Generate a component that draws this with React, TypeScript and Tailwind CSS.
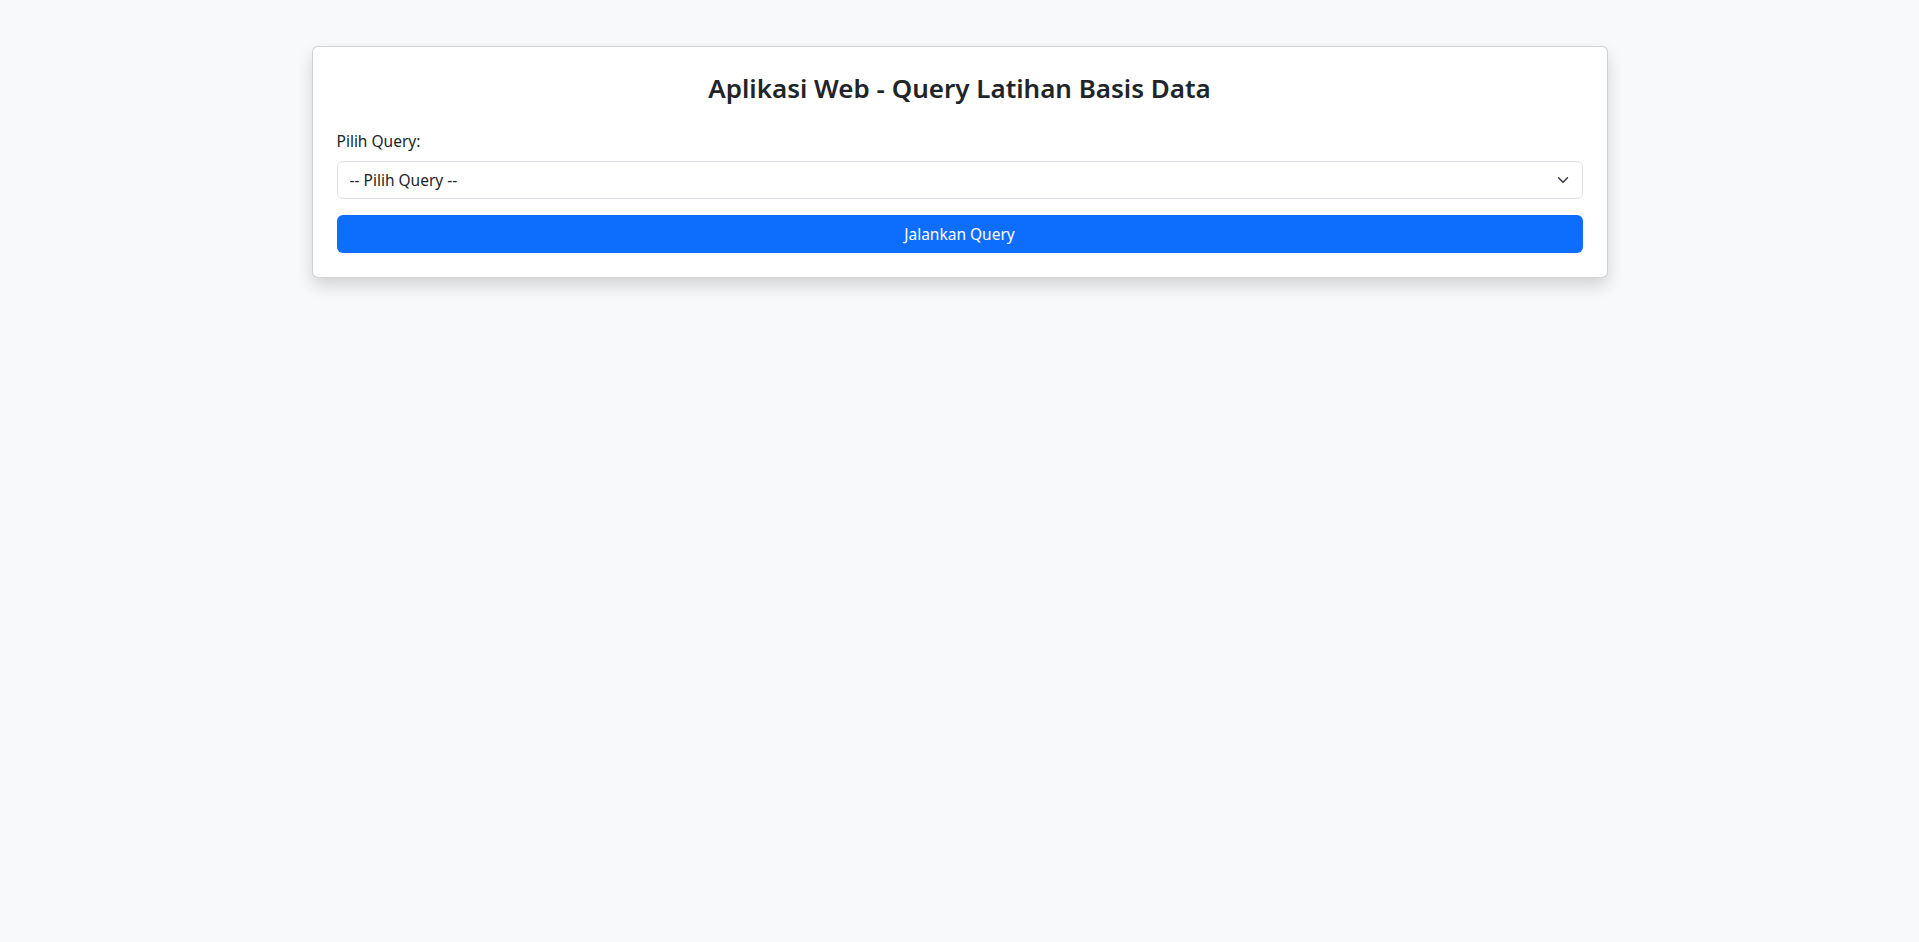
import { useState } from "react";

const queries = [
  { value: "", label: "-- Pilih Query --" },
  { value: "q1", label: "Query 1" },
  { value: "q2", label: "Query 2" },
  { value: "q3", label: "Query 3" },
];

function App() {
  const [selected, setSelected] = useState<string>("");

  return (
    <div
      className="min-h-screen bg-[#f8f9fa] text-[#212529]"
      style={{ fontFamily: '"Noto Sans", "Open Sans", sans-serif' }}
    >
      <div className="mx-auto max-w-[1320px] px-3 pt-[46px]">
        <div className="rounded-md border border-black/[0.175] bg-white p-6 shadow-[0_8px_16px_rgba(0,0,0,0.15)]">
          <h3 className="mb-6 h-[33.6px] pt-px text-center text-[26px] leading-[33.6px] font-semibold">
            Aplikasi Web - Query Latihan Basis Data
          </h3>

          <form onSubmit={(e) => e.preventDefault()}>
            <label htmlFor="query" className="mb-2 block text-[15.5px] leading-6">
              Pilih Query:
            </label>
            <div className="relative mb-4">
              <select
                id="query"
                value={selected}
                onChange={(e) => setSelected(e.target.value)}
                className="block h-[38px] w-full appearance-none rounded-md border border-[#dee2e6] bg-white py-1.5 pr-9 pl-3 text-[15.5px] leading-6 text-[#212529] outline-none"
              >
                {queries.map((q) => (
                  <option key={q.value} value={q.value}>
                    {q.label}
                  </option>
                ))}
              </select>
              <svg
                className="pointer-events-none absolute top-1/2 right-3 h-3 w-4 -translate-y-1/2"
                viewBox="0 0 16 16"
                fill="none"
                stroke="#343a40"
                strokeWidth="2"
                strokeLinecap="round"
                strokeLinejoin="round"
              >
                <path d="m2 5 6 6 6-6" />
              </svg>
            </div>
            <button
              type="submit"
              className="block h-[38px] w-full rounded-md bg-[#0d6efd] text-[15.5px] leading-6 text-white"
            >
              Jalankan Query
            </button>
          </form>
        </div>
      </div>
    </div>
  );
}

export default App;
